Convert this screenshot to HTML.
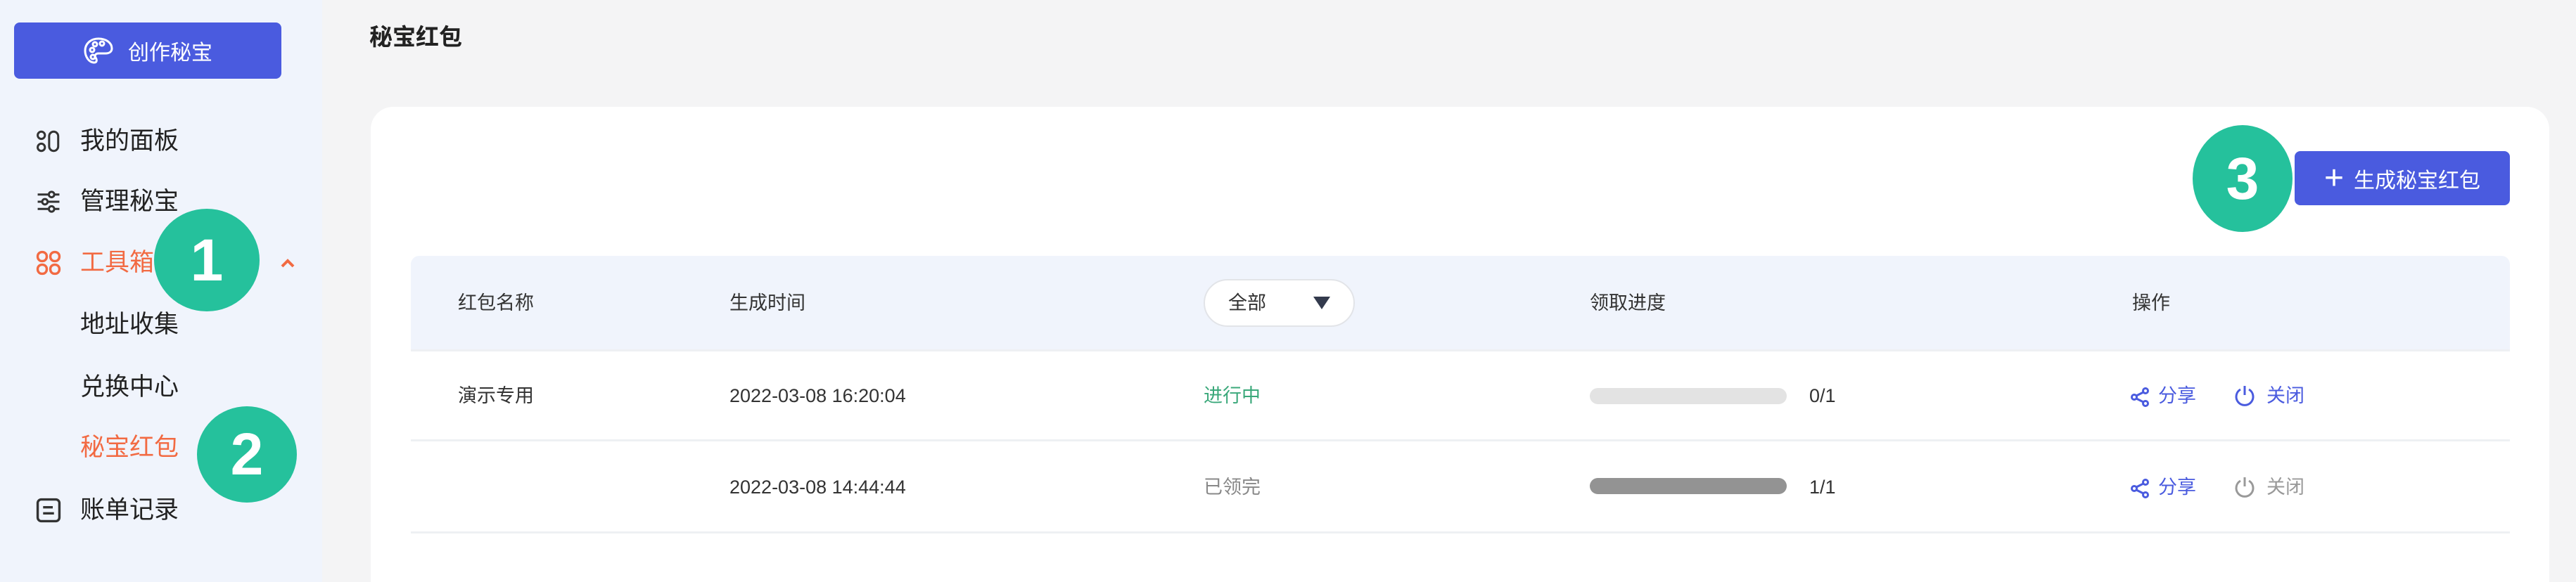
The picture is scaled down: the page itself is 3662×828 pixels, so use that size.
<!DOCTYPE html>
<html><head><meta charset="utf-8"><style>
*{margin:0;padding:0;box-sizing:border-box}
html,body{width:3662px;height:828px;overflow:hidden}
body{background:#f4f4f5;font-family:"Liberation Sans","Noto Sans CJK SC",sans-serif;position:relative}
.side{position:absolute;left:0;top:0;width:458px;height:828px;background:#f0f4fc}
.abs{position:absolute}
.btn{left:20px;top:32px;width:380px;height:80px;background:#4a5bdf;border-radius:8px;color:#fff;font-size:30px;display:flex;align-items:center;justify-content:center;gap:20px}
.mi{left:51px;font-size:35px;color:#222;display:flex;align-items:center;height:50px;line-height:50px}
.mi .ic{width:36px;height:36px;margin-right:27px}
.sub{left:114px;font-size:35px;color:#222;height:50px;line-height:50px}
.badge{background:#25c19c;color:#fff;border-radius:50%;font-weight:bold;font-size:84px;display:flex;align-items:center;justify-content:center}
.card{left:527px;top:152px;width:3097px;height:676px;background:#fff;border-radius:32px 32px 0 0}
.th{top:364px;left:584px;width:2984px;height:133px;background:#f0f4fc;border-radius:12px 12px 0 0}
.t{font-size:27px;color:#333;position:absolute;line-height:34px}
.line{position:absolute;left:584px;width:2984px;height:3px;background:#eef0f3}
</style></head><body>
<div class="side">
 <div class="abs btn"><svg width="44" height="40" viewBox="0 0 44 40" fill="none" stroke="#fff" stroke-width="3"><path d="M22 3C10 3 3 11 3 20c0 8 5 17 13 17 4 0 4-4 2-7-2-3 0-6 4-6h10c6 0 9-3 9-7C41 9 33 3 22 3z"/><circle cx="13" cy="19" r="3"/><circle cx="17" cy="11" r="3"/><circle cx="27" cy="10" r="3"/><circle cx="14" cy="29" r="3"/></svg><span>创作秘宝</span></div>
 <div class="abs mi" style="top:176px"><svg class="ic" viewBox="0 0 42 42" fill="none" stroke="#333" stroke-width="3.5"><circle cx="9" cy="11" r="6"/><circle cx="9" cy="31" r="6"/><rect x="22" y="5" width="15" height="32" rx="7.5"/></svg>我的面板</div>
 <div class="abs mi" style="top:262px"><svg class="ic" viewBox="0 0 42 42" fill="none" stroke="#333" stroke-width="3.5"><path d="M3 9h36M3 21h36M3 33h36"/><circle cx="26" cy="9" r="4.5" fill="#f0f4fc"/><circle cx="15" cy="21" r="4.5" fill="#f0f4fc"/><circle cx="26" cy="33" r="4.5" fill="#f0f4fc"/></svg>管理秘宝</div>
 <div class="abs mi" style="top:349px;color:#f26a42"><svg class="ic" viewBox="0 0 42 42" fill="none" stroke="#f26a42" stroke-width="4"><rect x="3" y="3" width="15" height="15" rx="7"/><rect x="24" y="3" width="15" height="15" rx="7"/><rect x="3" y="24" width="15" height="15" rx="7"/><rect x="24" y="24" width="15" height="15" rx="7"/></svg>工具箱</div>
 <svg class="abs" style="left:398px;top:368px" width="22" height="14" viewBox="0 0 22 14" fill="none" stroke="#f26a42" stroke-width="4"><path d="M3 11l8-8 8 8"/></svg>
 <div class="abs sub" style="top:437px">地址收集</div>
 <div class="abs sub" style="top:526px">兑换中心</div>
 <div class="abs sub" style="top:612px;color:#f26a42">秘宝红包</div>
 <div class="abs mi" style="top:701px"><svg class="ic" viewBox="0 0 42 42" fill="none" stroke="#333" stroke-width="4"><rect x="3" y="3" width="36" height="36" rx="6"/><path d="M12 16h16M12 26h18"/></svg>账单记录</div>
 <div class="abs badge" style="left:219px;top:297px;width:150px;height:146px">1</div>
 <div class="abs badge" style="left:280px;top:578px;width:142px;height:137px">2</div>
</div>
<div class="abs" style="left:525px;top:26px;font-size:33px;font-weight:bold;color:#222">秘宝红包</div>
<div class="abs card"></div>
<div class="abs badge" style="left:3117px;top:178px;width:142px;height:152px">3</div>
<div class="abs" style="left:3262px;top:215px;width:306px;height:77px;background:#4a5bdf;border-radius:8px;color:#fff;font-size:30px;display:flex;align-items:center;justify-content:center;gap:14px"><span style="font-size:48px;font-weight:300;line-height:40px">+</span>生成秘宝红包</div>
<div class="abs th"></div>
<div class="t" style="left:651px;top:414px">红包名称</div>
<div class="t" style="left:1037px;top:414px">生成时间</div>
<div class="abs" style="left:1711px;top:397px;width:215px;height:68px;background:#fff;border:2px solid #e2e4e8;border-radius:34px"></div>
<div class="t" style="left:1746px;top:414px">全部</div>
<svg class="abs" style="left:1866px;top:421px" width="26" height="20" viewBox="0 0 26 20"><path d="M1 1h24L13 19z" fill="#333a4d"/></svg>
<div class="t" style="left:2260px;top:414px">领取进度</div>
<div class="t" style="left:3031px;top:414px">操作</div>
<div class="line" style="top:497px"></div>
<div class="t" style="left:651px;top:546px">演示专用</div>
<div class="t" style="left:1037px;top:546px">2022-03-08 16:20:04</div>
<div class="t" style="left:1711px;top:546px;color:#3aa87a">进行中</div>
<div class="abs" style="left:2260px;top:552px;width:280px;height:23px;background:#e3e3e3;border-radius:12px"></div>
<div class="t" style="left:2572px;top:546px">0/1</div>
<div class="line" style="top:625px"></div>
<div class="t" style="left:1037px;top:676px">2022-03-08 14:44:44</div>
<div class="t" style="left:1711px;top:676px;color:#888">已领完</div>
<div class="abs" style="left:2260px;top:680px;width:280px;height:23px;background:#939393;border-radius:12px"></div>
<div class="t" style="left:2572px;top:676px">1/1</div>
<div class="line" style="top:756px"></div>
<svg class="abs" style="left:3028px;top:550px" width="28" height="30" viewBox="0 0 28 30" fill="none" stroke="#4a5bdf" stroke-width="3"><circle cx="22" cy="6" r="3.5"/><circle cx="6" cy="15" r="3.5"/><circle cx="22" cy="24" r="3.5"/><path d="M9 13l10-5M9 17l10 5"/></svg>
<div class="t" style="left:3068px;top:546px;color:#4a5bdf">分享</div>
<svg class="abs" style="left:3176px;top:546px" width="30" height="34" viewBox="0 0 30 34" fill="none" stroke="#4a5bdf" stroke-width="3"><path d="M9 8a12 12 0 1 0 12 0"/><path d="M15 3v13"/></svg>
<div class="t" style="left:3222px;top:546px;color:#4a5bdf">关闭</div>
<svg class="abs" style="left:3028px;top:680px" width="28" height="30" viewBox="0 0 28 30" fill="none" stroke="#4a5bdf" stroke-width="3"><circle cx="22" cy="6" r="3.5"/><circle cx="6" cy="15" r="3.5"/><circle cx="22" cy="24" r="3.5"/><path d="M9 13l10-5M9 17l10 5"/></svg>
<div class="t" style="left:3068px;top:676px;color:#4a5bdf">分享</div>
<svg class="abs" style="left:3176px;top:676px" width="30" height="34" viewBox="0 0 30 34" fill="none" stroke="#999" stroke-width="3"><path d="M9 8a12 12 0 1 0 12 0"/><path d="M15 3v13"/></svg>
<div class="t" style="left:3222px;top:676px;color:#999">关闭</div>
</body></html>
